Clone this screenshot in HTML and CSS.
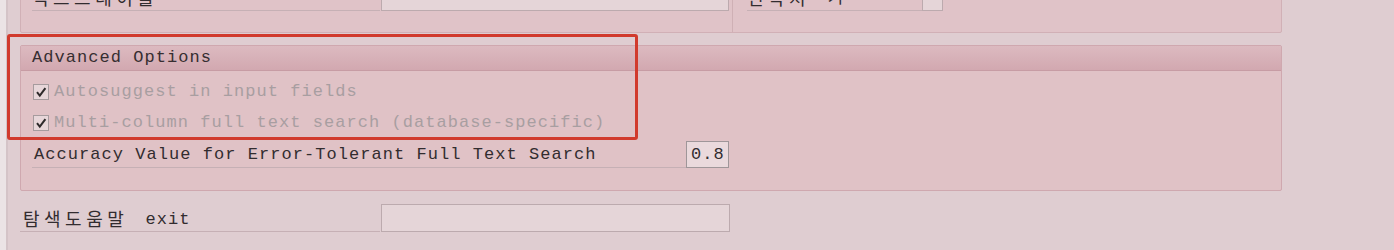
FILE: index.html
```html
<!DOCTYPE html>
<html lang="ko">
<head>
    <meta charset="UTF-8">
    <title>Advanced Options</title>
    <link rel="stylesheet" href="styles.css">
</head>
<body>
    <div class="page">
        <div class="edge"></div>

        <div class="content">
            <div class="top-box">
                <div class="top-left">
                    <div class="field-row">
                        <span class="label wide"><span><span class="ko">픽스프레이블</span></span></span>
                        <span class="input long"></span>
                    </div>
                </div>
                <div class="top-right">
                    <div class="field-row">
                        <span class="label short"><span><span class="ko">연락처</span> 키</span></span>
                        <span class="input tiny">M</span>
                    </div>
                </div>
            </div>

            <div class="adv">
                <div class="adv-head">Advanced Options</div>
                <div class="adv-body">
                    <div class="check-row">
                        <span class="check">
                            <svg width="12" height="12" viewBox="0 0 12 12"><path d="M2 6.2 L4.8 9.6 L10.4 2.2" fill="none" stroke="#2e2a2b" stroke-width="2"/></svg>
                        </span>
                        <span class="off">Autosuggest in input fields</span>
                    </div>
                    <div class="check-row">
                        <span class="check">
                            <svg width="12" height="12" viewBox="0 0 12 12"><path d="M2 6.2 L4.8 9.6 L10.4 2.2" fill="none" stroke="#2e2a2b" stroke-width="2"/></svg>
                        </span>
                        <span class="off">Multi-column full text search (database-specific)</span>
                    </div>
                    <div class="acc-row">
                        <span class="label acc">Accuracy Value for Error-Tolerant Full Text Search</span>
                        <span class="input num">0.8</span>
                    </div>
                </div>
            </div>

            <div class="field-row bottom-row">
                <span class="label exit"><span><span class="ko">탐색도움말</span> exit</span></span>
                <span class="input long"></span>
            </div>
        </div>
    </div>

    <!-- 빨간 표시 -->
    <div class="mark"></div>
</body>
</html>
```

FILE: styles.css
```css
* {
    margin: 0;
    padding: 0;
    box-sizing: border-box;
}

body {
    width: 1394px;
    height: 250px;
    overflow: hidden;
    background-color: #dfcdd1;
    color: #322c2f;
    font-family: "Liberation Mono", "Noto Sans CJK KR", monospace;
    font-size: 17px;
    letter-spacing: 1.05px;
    position: relative;
}

.page {
    display: flex;
    height: 250px;
}

.edge {
    width: 8px;
    background-color: #ebe3e5;
    border-right: 2px solid #d4c3c7;
}

.content {
    width: 1274px;
    padding-left: 12px;
}

.ko {
    letter-spacing: 4.5px;
    font-size: 18px;
    vertical-align: -2px;
    margin-right: 6px;
}

/* 윗 그룹 (잘린 부분) */
.content .top-box {
    display: flex;
    height: 55px;
    margin-top: -22px;
    background-color: #e0c3c8;
    border: 1px solid #d1b0b6;
    border-radius: 2px;
}

.content .top-box .top-left {
    width: 711px;
    padding: 4px 0 0 11px;
}

.content .top-box .top-right {
    flex: 1;
    border-left: 1px solid #cfb0b5;
    padding: 4px 0 0 14px;
}

.field-row {
    display: flex;
    height: 28px;
    align-items: stretch;
}

.label {
    display: flex;
    align-items: center;
    border-bottom: 1px solid #c6b0b5;
    white-space: nowrap;
}

.label.wide {
    width: 348px;
}

.label.short {
    width: 175px;
}

.input {
    display: flex;
    align-items: center;
    background-color: #e5d5d8;
    border: 1px solid #bcaaae;
}

.input.long {
    width: 348px;
    margin-left: 1px;
}

.input.tiny {
    width: 21px;
    font-size: 12px;
    justify-content: center;
}

/* Advanced Options */
.content .adv {
    margin-top: 12px;
    height: 146px;
    background-color: #e0c2c6;
    border: 1px solid #cfa8af;
    border-radius: 2px;
}

.content .adv .adv-head {
    height: 25px;
    line-height: 24px;
    padding-left: 11px;
    background: linear-gradient(#dcbac0, #d2a8b0);
    border-bottom: 1px solid #c79ca4;
    color: #362e31;
}

.content .adv .adv-body {
    padding: 5px 0 0 12px;
}

.check-row {
    display: flex;
    align-items: center;
    height: 31px;
}

.check {
    width: 16px;
    height: 16px;
    margin-right: 5px;
    border: 1px solid #a69b9e;
    background-color: #e7d6d9;
    display: flex;
    align-items: center;
    justify-content: center;
}

.off {
    color: #a89ea1;
}

.acc-row {
    display: flex;
    height: 31px;
    padding-top: 3px;
}

.label.acc {
    width: 654px;
    margin-left: -1px;
    padding-left: 2px;
    height: 27px;
}

.input.num {
    width: 43px;
    height: 27px;
    padding-left: 4px;
    background-color: #ead9dc;
    border-color: #9f9699;
}

/* 아래 줄 */
.bottom-row {
    margin-top: 13px;
}

.label.exit {
    width: 360px;
    padding-left: 3px;
}

.bottom-row .input.long {
    width: 349px;
}

.mark {
    position: absolute;
    left: 7px;
    top: 34px;
    width: 631px;
    height: 106px;
    border: 3px solid #d13a2d;
    border-radius: 3px;
}
```
